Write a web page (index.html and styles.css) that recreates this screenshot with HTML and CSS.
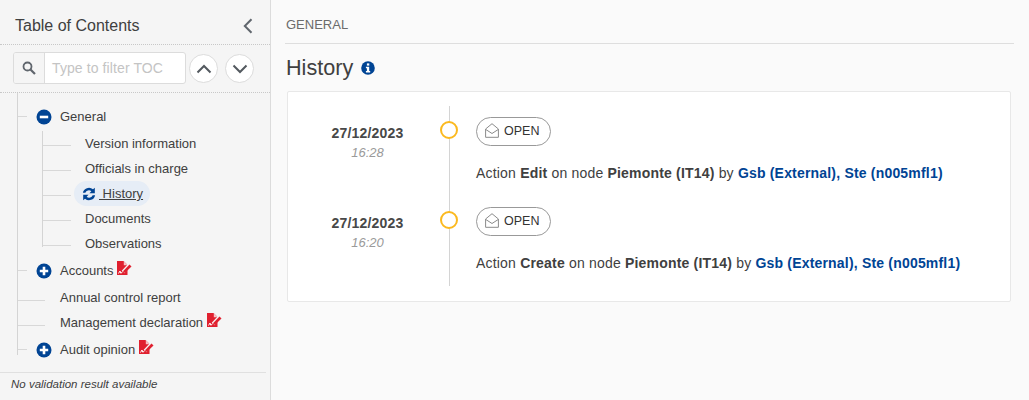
FILE: index.html
```
<!DOCTYPE html>
<html lang="en">
<head>
<meta charset="utf-8">
<title>History</title>
<link rel="stylesheet" href="styles.css">
</head>
<body>
<svg class="defs" width="0" height="0" aria-hidden="true">
  <defs>
    <symbol id="sig" viewBox="0 0 15 15">
      <path d="M0 0H6.500L10.500 4V14H0Z" fill="#e0202f"/>
      <path d="M6.800 0.300L10.700 4.200H6.800Z" fill="#f7c3c6"/>
      <path d="M6 11L12.500 4" stroke="#f5f5f5" stroke-width="3.400"/>
      <path d="M5.800 12L6.500 9.800L12.500 3.500L14.500 5.400L8.300 11.500Z" fill="#e0202f"/>
      <path d="M1.500 12.500L3 10L3.800 12.200L5.500 11" fill="none" stroke="#fff" stroke-width="1"/>
    </symbol>
    <symbol id="env" viewBox="0 0 14 15">
      <path d="M0.600 6L7 0.700L13.400 6V14.300H0.600Z" fill="none" stroke="#8a8a8a" stroke-width="1"/>
      <path d="M0.800 6.500L7 10.500L13.200 6.500" fill="none" stroke="#8a8a8a" stroke-width="1"/>
    </symbol>
    <symbol id="plus" viewBox="0 0 16 16">
      <circle cx="8" cy="8" r="7.500" fill="#004494"/>
      <path d="M8 3.800V12.200M3.800 8H12.200" stroke="#fff" stroke-width="2.600"/>
    </symbol>
  </defs>
</svg>
<div class="app">
  <aside class="sidebar">
    <header class="toc-head">
      <h2 class="toc-title">Table of Contents</h2>
      <svg class="collapse" width="10" height="16" viewBox="0 0 10 16"><path d="M8.500 1.200L1.800 8L8.500 14.800" fill="none" stroke="#60666d" stroke-width="2"/></svg>
    </header>
    <div class="toc-search">
      <div class="search-box">
        <span class="search-addon">
          <svg width="14" height="14" viewBox="0 0 14 14"><circle cx="5.500" cy="5.500" r="4" fill="none" stroke="#60666d" stroke-width="1.800"/><path d="M8.500 8.500L13 13" stroke="#60666d" stroke-width="2.200"/></svg>
        </span>
        <span class="search-input">Type to filter TOC</span>
      </div>
      <button class="round-btn" aria-label="Previous"><svg width="16" height="10" viewBox="0 0 16 10"><path d="M1.500 8.500L8 2L14.500 8.500" fill="none" stroke="#53595f" stroke-width="2"/></svg></button>
      <button class="round-btn" aria-label="Next"><svg width="16" height="10" viewBox="0 0 16 10"><path d="M1.500 1.500L8 8L14.500 1.500" fill="none" stroke="#53595f" stroke-width="2"/></svg></button>
    </div>
    <nav class="tree">
      <div class="row top branch">
        <svg class="toggle" width="16" height="16" viewBox="0 0 16 16"><circle cx="8" cy="8" r="7.500" fill="#004494"/><path d="M3.800 8H12.200" stroke="#fff" stroke-width="2.600"/></svg>
        <span>General</span>
      </div>
      <div class="children">
        <div class="row child"><span>Version information</span></div>
        <div class="row child"><span>Officials in charge</span></div>
        <div class="row child current">
          <a class="current-pill" href="#">
            <svg width="14" height="14" viewBox="0 0 13 13"><path d="M0.800 5.400A5.700 5.700 0 0 1 10.200 2.200L11.900 0.600V5.700H6.900L8.700 3.900A3.500 3.500 0 0 0 3.100 5.400Z" fill="#004494"/><path d="M12.200 7.600A5.700 5.700 0 0 1 2.800 10.800L1.100 12.400V7.300H6.100L4.300 9.100A3.500 3.500 0 0 0 9.900 7.600Z" fill="#004494"/></svg><span class="current-link">&nbsp;History</span>
          </a>
        </div>
        <div class="row child"><span>Documents</span></div>
        <div class="row child"><span>Observations</span></div>
      </div>
      <div class="row top branch">
        <svg class="toggle" width="16" height="16"><use href="#plus"/></svg>
        <span>Accounts</span>
        <svg class="sig" width="15" height="15"><use href="#sig"/></svg>
      </div>
      <div class="row top leaf"><span>Annual control report</span></div>
      <div class="row top leaf"><span>Management declaration</span><svg class="sig" width="15" height="15"><use href="#sig"/></svg></div>
      <div class="row top branch last">
        <svg class="toggle" width="16" height="16"><use href="#plus"/></svg>
        <span>Audit opinion</span>
        <svg class="sig" width="15" height="15"><use href="#sig"/></svg>
      </div>
    </nav>
    <footer class="validation">No validation result available</footer>
  </aside>
  <main class="main">
    <div class="section-label">GENERAL</div>
    <h1 class="page-title">History
      <svg width="14" height="14" viewBox="0 0 14 14"><circle cx="7" cy="7" r="6.800" fill="#004494"/><rect x="5.900" y="2.400" width="2.400" height="2.200" fill="#fff"/><path d="M4.900 5.800H8.200V10H9.200V11.500H4.900V10H5.900V7.300H4.900Z" fill="#fff"/></svg>
    </h1>
    <section class="card">
      <article class="entry">
        <div class="when">
          <div class="date">27/12/2023</div>
          <div class="time">16:28</div>
        </div>
        <div class="rail"><span class="dot"></span></div>
        <div class="what">
          <span class="status"><svg width="14" height="15"><use href="#env"/></svg>OPEN</span>
          <p class="desc">Action <b>Edit</b> on node <b>Piemonte (IT14)</b> by <a class="user" href="#">Gsb (External), Ste (n005mfl1)</a></p>
        </div>
      </article>
      <article class="entry">
        <div class="when">
          <div class="date">27/12/2023</div>
          <div class="time">16:20</div>
        </div>
        <div class="rail"><span class="dot"></span></div>
        <div class="what">
          <span class="status"><svg width="14" height="15"><use href="#env"/></svg>OPEN</span>
          <p class="desc">Action <b>Create</b> on node <b>Piemonte (IT14)</b> by <a class="user" href="#">Gsb (External), Ste (n005mfl1)</a></p>
        </div>
      </article>
    </section>
  </main>
</div>
</body>
</html>
```
FILE: styles.css
```
* { box-sizing: border-box; }
html, body { margin: 0; height: 100%; overflow: hidden; }
body { font-family: "Liberation Sans", Arial, sans-serif; font-size: 13px; color: #404040; background: #fafafa; }
.defs { position: absolute; }
.app { display: flex; height: 400px; }

.sidebar { width: 271px; flex: none; height: 400px; background: #f5f5f5; border-right: 1px solid #dcdcdc; display: flex; flex-direction: column; }
.toc-head { height: 45px; display: flex; align-items: center; justify-content: space-between; padding: 13px 17px 6px 15px; border-bottom: 1px dotted #c8c8c8; }
.toc-title { margin: 0; font-size: 16px; font-weight: 400; color: #404040; }
.toc-search { height: 48px; display: flex; align-items: flex-start; padding: 7px 0 0 13px; border-bottom: 1px dotted #c8c8c8; }
.search-box { width: 173px; height: 32px; display: flex; border: 1px solid #dcdcdc; border-radius: 3px; background: #fff; overflow: hidden; }
.search-addon { width: 31px; flex: none; display: flex; align-items: center; justify-content: center; background: #f5f5f5; border-right: 1px solid #dcdcdc; }
.search-input { padding-left: 7px; font-size: 14px; letter-spacing: 0.1px; line-height: 30px; color: #c4c4c4; white-space: nowrap; }
.round-btn { width: 29px; height: 29px; padding: 0; margin: 2px 0 0 3px; display: flex; align-items: center; justify-content: center; border: 1px solid #dcdcdc; border-radius: 50%; background: #fff; }
.round-btn + .round-btn { margin-left: 7px; }

.tree { position: relative; padding-top: 10px; flex: 1; }
.tree::before { content: ""; position: absolute; left: 17px; top: 0; height: 262px; width: 1px; background: #d4d4d4; }
.row { position: relative; display: flex; align-items: center; height: 25px; white-space: nowrap; }
.top { padding-left: 60px; }
.branch { height: 27px; padding-left: 36px; }
.toggle { margin-right: 8px; flex: none; }
.sig { margin: -4px 0 0 4px; flex: none; }
.branch::before, .leaf::before, .child::before { content: ""; position: absolute; height: 1px; background: #d8d8d8; }
.branch::before { left: 18px; width: 9px; top: 13px; }
.branch + .leaf { margin-top: 1px; }
.leaf + .branch { margin-top: 1px; }
.leaf::before { left: 18px; width: 27px; top: 15px; }
.children { position: relative; margin: 1px 0; }
.children::before { content: ""; position: absolute; left: 42px; top: 0; height: 116px; width: 1px; background: #d4d4d4; }
.child { padding-left: 85px; }
.child::before { left: 43px; width: 28px; top: 14px; }
.current-pill { display: flex; align-items: center; margin-left: -11px; height: 25px; padding: 0 7px 0 8px; border-radius: 13px; background: #e6edf6; color: #404040; text-decoration: none; }
.current-link { margin-left: 3px; text-decoration: underline; }

.validation { margin: 0 4px 0 0; height: 28px; padding: 5px 0 0 11px; border-top: 1px solid #e0e0e0; font-size: 11.5px; font-style: italic; color: #404040; }

.main { flex: 1; min-width: 0; padding: 0 15px 0 14px; }
.section-label { height: 44px; padding: 17px 0 0 1px; font-size: 13px; line-height: 15px; color: #6b6b6b; border-bottom: 1px solid #dedede; }
.page-title { margin: 11px 0 11px 1px; font-size: 21.6px; line-height: 25px; height: 25px; font-weight: 400; color: #404040; display: flex; align-items: center; gap: 8px; }
.page-title svg { margin-top: 1px; }
.card { margin: 0 3px 0 2px; height: 211px; padding: 14px 0 14px; background: #fff; border: 1px solid #e8e8e8; border-radius: 2px; }
.entry { display: flex; height: 90px; }
.when { width: 161px; flex: none; padding: 19px 2px 0 0; text-align: center; }
.date { font-size: 14px; line-height: 16px; font-weight: 700; color: #484848; letter-spacing: 0.2px; }
.time { margin-top: 4px; font-size: 13px; line-height: 15px; font-style: italic; color: #9a9a9a; }
.rail { position: relative; width: 1px; flex: none; background: #d4d4d4; }
.dot { position: absolute; left: -9px; top: 15px; width: 18px; height: 18px; border: 2.5px solid #fbb91f; border-radius: 50%; background: #fff; }
.what { padding: 11px 0 0 26px; white-space: nowrap; }
.status { display: inline-flex; align-items: center; gap: 5px; height: 29px; padding: 0 11px 2px 8px; border: 1px solid #999; border-radius: 15px; font-size: 12.5px; color: #333; }
.desc { margin: 20px 0 0; font-size: 14px; letter-spacing: 0.19px; line-height: 15px; color: #404040; }
.user { color: #004494; font-weight: 700; text-decoration: none; }
```
